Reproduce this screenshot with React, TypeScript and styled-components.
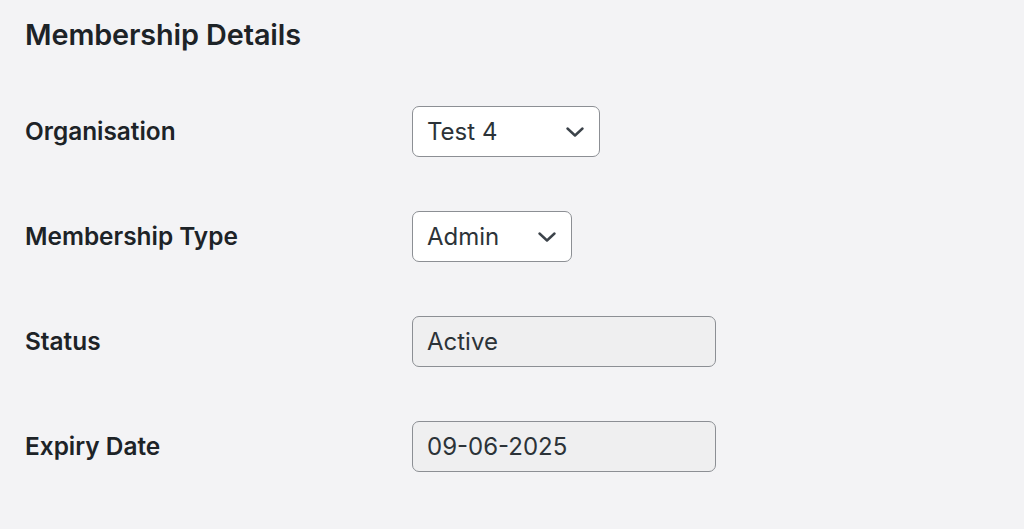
import { FC } from "react";
import styled, { createGlobalStyle } from "styled-components";

const GlobalStyle = createGlobalStyle`
  html, body {
    margin: 0;
    padding: 0;
    background: #f3f3f5;
  }
  body {
    font-family: Inter, "Noto Sans", "Liberation Sans", sans-serif;
    color: #1d2327;
  }
`;

interface SelectProps {
  value: string;
  options: string[];
  width: number;
}

interface FieldRowProps {
  label: string;
}

const Chevron: FC = () => (
  <svg width="18" height="10" viewBox="0 0 18 10" fill="none" stroke="#3c434a" strokeWidth="2.4" strokeLinecap="round" strokeLinejoin="round">
    <path d="M1.5 1.5 9 8.5l7.5-7" />
  </svg>
);

const SelectBox: FC<SelectProps> = ({ value, options, width }) => (
  <SelectWrap $width={width}>
    <Select defaultValue={value}>
      {options.map((o) => (
        <option key={o}>{o}</option>
      ))}
    </Select>
    <ChevronSlot>
      <Chevron />
    </ChevronSlot>
  </SelectWrap>
);

const FieldRow: FC<React.PropsWithChildren<FieldRowProps>> = ({ label, children }) => (
  <Row>
    <Label>{label}</Label>
    <div>{children}</div>
  </Row>
);

export default function App() {
  return (
    <Page>
      <GlobalStyle />
      <Heading>Membership Details</Heading>
      <FormTable>
        <FieldRow label="Organisation">
          <SelectBox value="Test 4" options={["Test 1", "Test 2", "Test 3", "Test 4"]} width={188} />
        </FieldRow>
        <FieldRow label="Membership Type">
          <SelectBox value="Admin" options={["Admin", "Member"]} width={160} />
        </FieldRow>
        <FieldRow label="Status">
          <ReadOnlyInput readOnly value="Active" />
        </FieldRow>
        <FieldRow label="Expiry Date">
          <ReadOnlyInput readOnly value="09-06-2025" />
        </FieldRow>
      </FormTable>
    </Page>
  );
}

const Page = styled.div`
  padding: 0 25px;
  min-height: 529px;
  box-sizing: border-box;
`;

const Heading = styled.h2`
  margin: 0;
  padding-top: 17px;
  height: 79px;
  box-sizing: border-box;
  font-size: 28.8px;
  font-weight: 600;
  line-height: 36px;
  letter-spacing: -0.1px;
`;

const FormTable = styled.div`
  display: flex;
  flex-direction: column;
`;

const Row = styled.div`
  display: grid;
  grid-template-columns: 387px 1fr;
  align-items: center;
  height: 105px;
`;

const Label = styled.div`
  font-size: 24.4px;
  font-weight: 600;
  line-height: 32px;
  margin-top: -2px;
`;

const SelectWrap = styled.div<{ $width: number }>`
  position: relative;
  width: ${(p) => p.$width}px;
  height: 51px;
`;

const Select = styled.select`
  appearance: none;
  -webkit-appearance: none;
  width: 100%;
  height: 100%;
  box-sizing: border-box;
  padding: 0 40px 0 14px;
  border: 1.5px solid #8c8f94;
  border-radius: 7px;
  background: #fff;
  color: #2c3338;
  font-family: inherit;
  font-size: 24px;
  outline: none;
`;

const ChevronSlot = styled.span`
  position: absolute;
  right: 16px;
  top: 50%;
  transform: translateY(-50%);
  display: flex;
  pointer-events: none;
`;

const ReadOnlyInput = styled.input`
  width: 304px;
  height: 51px;
  box-sizing: border-box;
  padding: 0 14px;
  border: 1.5px solid #8c8f94;
  border-radius: 7px;
  background: #efeff0;
  color: #2c3338;
  font-family: inherit;
  font-size: 24px;
  outline: none;
`;
